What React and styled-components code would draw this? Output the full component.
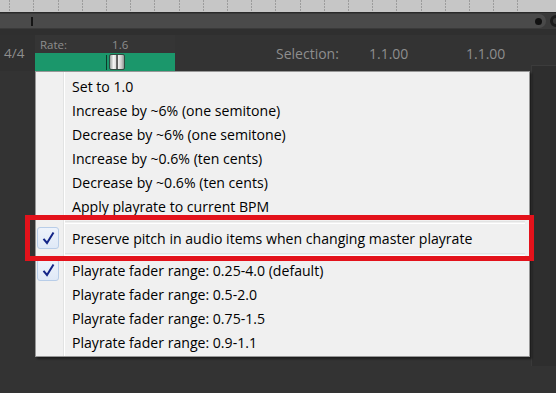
import React from "react";
import styled, { createGlobalStyle } from "styled-components";

const Global = createGlobalStyle`
  html, body { margin: 0; padding: 0; background: #333333; }
  body { font-family: "Open Sans", "Noto Sans", sans-serif; }
`;

const Page = styled.div`
  position: relative;
  width: 556px;
  height: 393px;
  overflow: hidden;
  background: #333333;
  display: flex;
  flex-direction: column;
`;

const Ruler = styled.div`
  height: 12px;
  flex: none;
  background-color: #c6c6c6;
  background-image:
    repeating-linear-gradient(180deg, transparent 0 2px, #c6c6c6 2px 3px),
    repeating-linear-gradient(90deg, transparent 0 23.2px, #9c9c9c 23.2px 24.2px);
  background-position: 0 0, -14px 0;
`;

const ScrollRow = styled.div`
  height: 16px;
  flex: none;
  background: #3a3a3a;
  border-top: 1px solid #2a2a2a;
  display: flex;
  align-items: center;
  gap: 4px;
`;

const Track = styled.div`
  position: relative;
  flex: 1;
  height: 14px;
  background: #4a4a4a;
  border-radius: 0 7px 7px 0;
  display: flex;
  align-items: center;
  justify-content: flex-end;
  padding-right: 4px;
`;

const Marker = styled.div`
  position: absolute;
  left: 31px;
  top: 3px;
  width: 2px;
  height: 9px;
  background: #151515;
`;

const Dot = styled.div`
  width: 7px;
  height: 7px;
  border-radius: 50%;
  background: #111;
`;

const Knob = styled.div`
  width: 12px;
  height: 12px;
  border-radius: 50%;
  border: 3px solid #1c1c1c;
  box-sizing: border-box;
  margin-right: -6px;
`;

const Band = styled.div`
  height: 6px;
  flex: none;
  background: #2f2f2f;
`;

const Transport = styled.div`
  height: 36px;
  flex: none;
  display: flex;
  background: #333333;
  color: #8e8e8e;
`;

const TimeSig = styled.div`
  width: 35px;
  flex: none;
  display: flex;
  align-items: center;
  padding: 0 0 0 4px;
  box-sizing: border-box;
  font-size: 13.5px;
  background: #303030;
`;

const RatePanel = styled.div`
  width: 140px;
  flex: none;
  display: flex;
  flex-direction: column;
`;

const RateLabels = styled.div`
  height: 18px;
  display: flex;
  align-items: center;
  font-size: 11.5px;
  padding-left: 5px;
  gap: 45px;
  background: #353535;
`;

const Fader = styled.div`
  position: relative;
  height: 18px;
  background: #1b976b;
`;

const FaderTick = styled.div`
  position: absolute;
  left: 71px;
  top: 2px;
  width: 1px;
  height: 15px;
  background: #0d3a2a;
`;

const Thumb = styled.div`
  position: absolute;
  left: 74px;
  top: 1px;
  width: 16px;
  height: 16px;
  box-sizing: border-box;
  border: 1px solid #2f4a40;
  border-radius: 2px;
  background: linear-gradient(90deg, #9aa09e 0%, #f4f4f4 25%, #d8d8d8 45%, #3a3a3a 47%, #3a3a3a 53%, #f2f2f2 56%, #cfcfcf 80%, #8f9593 100%);
`;

const Selection = styled.div`
  flex: 1;
  display: flex;
  align-items: center;
  padding: 0 0 0 101px;
  font-size: 14px;
  box-sizing: border-box;
`;

const SelLabel = styled.span`
  width: 93px;
`;

const SelValue = styled.span`
  width: 97px;
`;

const Lower = styled.div`
  flex: 1;
  background: #333333;
  display: flex;
  justify-content: flex-end;
`;

const SidePanel = styled.div`
  width: 24px;
  background: #2e2e2e;
  border-left: 1px solid #3a3a3a;
  margin-top: -6px;
  border-top: 1px solid #3c3c3c;
  height: 300px;
`;

const Menu = styled.div`
  position: absolute;
  left: 35px;
  top: 71px;
  width: 495px;
  box-sizing: border-box;
  padding: 2px 2px 2px 0;
  border: 1px solid #979797;
  box-shadow: 2px 2px 2px rgba(0, 0, 0, 0.45);
  background:
    linear-gradient(90deg, transparent 27px, #e2e3e3 27px, #e2e3e3 28px, #ffffff 28px, #ffffff 29px, transparent 29px),
    #f0f0f0;
  font-family: "Open Sans", "Noto Sans", sans-serif;
  font-size: 14.1px;
  color: #000;
`;

const Item = styled.div`
  height: 24px;
  display: flex;
  align-items: center;
`;

const Gutter = styled.div`
  width: 28px;
  height: 24px;
  flex: none;
  display: flex;
  align-items: center;
`;

const CheckBox = styled.div`
  width: 22px;
  height: 22px;
  box-sizing: border-box;
  margin-left: 1px;
  border: 1px solid #b8cde8;
  border-radius: 3px;
  background: linear-gradient(180deg, #eef3fb, #dfe9f7);
  display: flex;
  align-items: center;
  justify-content: center;
`;

const Label = styled.span`
  padding-left: 8px;
  white-space: nowrap;
`;

const Separator = styled.div`
  height: 8px;
  display: flex;
  align-items: center;
  padding-left: 29px;
  &::after {
    content: "";
    flex: 1;
    height: 1px;
    border-top: 1px solid #e2e3e3;
    border-bottom: 1px solid #ffffff;
    margin-right: 2px;
  }
`;

const Highlight = styled.div`
  position: absolute;
  left: 25px;
  top: 215px;
  width: 509px;
  height: 46px;
  box-sizing: border-box;
  border: 5px solid #e3121b;
  pointer-events: none;
`;

const Check = () => (
  <svg width="13" height="14" viewBox="0 0 13 14">
    <path d="M1.5 7.8 L5 12 L11.5 1.5" fill="none" stroke="#142588" strokeWidth="2" strokeLinejoin="miter" />
  </svg>
);

const items1 = [
  "Set to 1.0",
  "Increase by ~6% (one semitone)",
  "Decrease by ~6% (one semitone)",
  "Increase by ~0.6% (ten cents)",
  "Decrease by ~0.6% (ten cents)",
  "Apply playrate to current BPM",
];

const items3 = [
  { t: "Playrate fader range: 0.25-4.0 (default)", c: true },
  { t: "Playrate fader range: 0.5-2.0" },
  { t: "Playrate fader range: 0.75-1.5" },
  { t: "Playrate fader range: 0.9-1.1" },
];

const MenuItem = ({ text, checked }) => (
  <Item>
    <Gutter>{checked && <CheckBox><Check /></CheckBox>}</Gutter>
    <Label>{text}</Label>
  </Item>
);

export default function App() {
  return (
    <>
      <Global />
      <Page>
        <Ruler />
        <ScrollRow>
          <Track>
            <Marker />
            <Dot />
          </Track>
          <Knob />
        </ScrollRow>
        <Band />
        <Transport>
          <TimeSig>4/4</TimeSig>
          <RatePanel>
            <RateLabels>
              <span>Rate:</span>
              <span>1.6</span>
            </RateLabels>
            <Fader>
              <FaderTick />
              <Thumb />
            </Fader>
          </RatePanel>
          <Selection>
            <SelLabel>Selection:</SelLabel>
            <SelValue>1.1.00</SelValue>
            <SelValue>1.1.00</SelValue>
          </Selection>
        </Transport>
        <Lower>
          <SidePanel />
        </Lower>
        <Menu>
          {items1.map((t) => (
            <MenuItem key={t} text={t} />
          ))}
          <Separator />
          <MenuItem text="Preserve pitch in audio items when changing master playrate" checked />
          <Separator />
          {items3.map((i) => (
            <MenuItem key={i.t} text={i.t} checked={i.c} />
          ))}
        </Menu>
        <Highlight />
      </Page>
    </>
  );
}
